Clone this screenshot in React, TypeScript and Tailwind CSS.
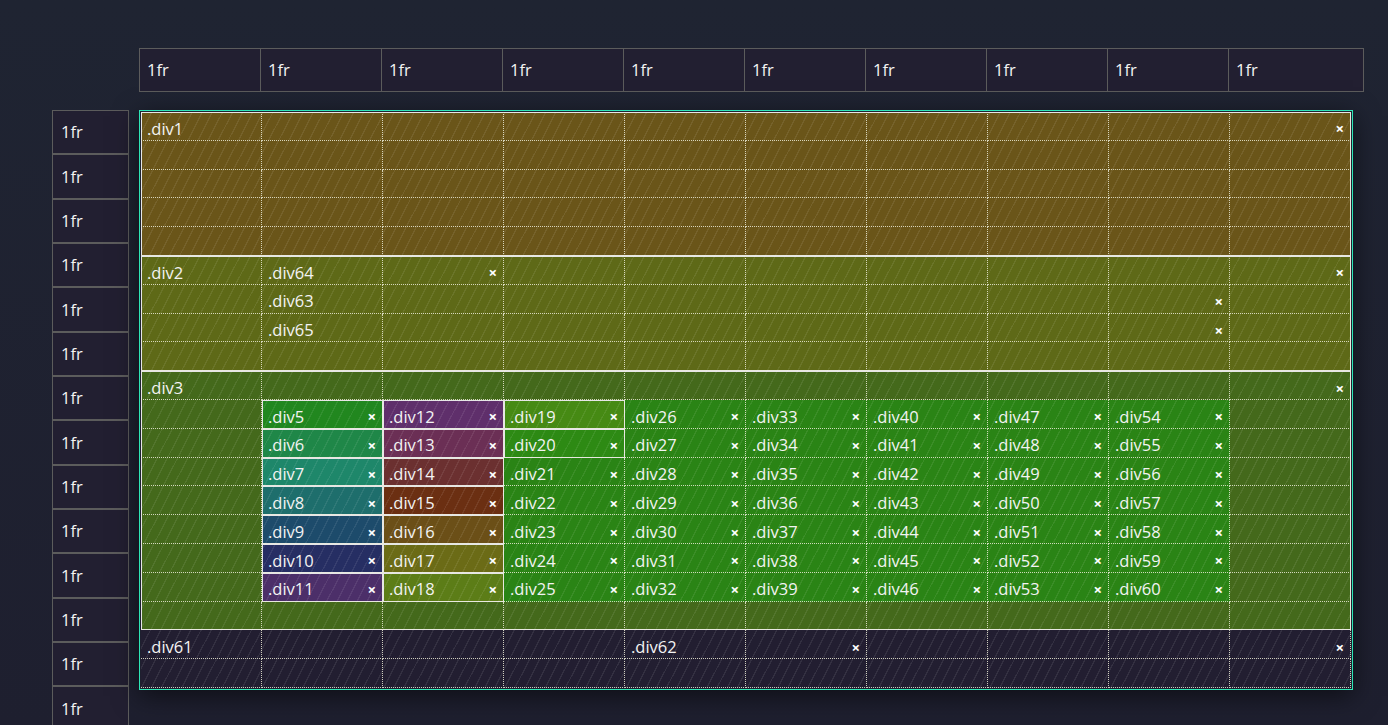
import React from "react";

const colStart: Record<number, string> = {
  2: "col-start-2",
  3: "col-start-3",
  4: "col-start-4",
  5: "col-start-5",
  6: "col-start-6",
  7: "col-start-7",
  8: "col-start-8",
  9: "col-start-9",
};
const rowStart: Record<number, string> = {
  11: "row-start-11",
  12: "row-start-12",
  13: "row-start-13",
  14: "row-start-14",
  15: "row-start-15",
  16: "row-start-16",
  17: "row-start-17",
};

const col2 = ["bg-[#21871f]", "bg-[#1f8748]", "bg-[#1e876a]", "bg-[#1e6e6c]", "bg-[#1d4b6b]", "bg-[#262e63]", "bg-[#4c2f69]"];
const col3 = ["bg-[#5f2f6b]", "bg-[#6b2f55]", "bg-[#6b3030]", "bg-[#6b2f12]", "bg-[#6b4f17]", "bg-[#6b6b16]", "bg-[#5c7d17]"];

type Item = { name: string; cls: string; x?: boolean; bordered?: boolean };

function buildNested(): Item[] {
  const out: Item[] = [];
  let n = 5;
  for (let c = 2; c <= 9; c++) {
    for (let r = 11; r <= 17; r++) {
      const i = r - 11;
      let bg = "bg-[#2a8415]";
      let bordered = false;
      if (c === 2) {
        bg = col2[i];
        bordered = true;
      } else if (c === 3) {
        bg = col3[i];
        bordered = true;
      } else if (c === 4 && i === 0) {
        bg = "bg-[#468a14]";
        bordered = true;
      } else if (c === 4 && i === 1) {
        bg = "bg-[#2d8a14]";
        bordered = true;
      }
      out.push({
        name: `.div${n}`,
        cls: `${colStart[c]} ${rowStart[r]} ${bg}`,
        x: true,
        bordered,
      });
      n++;
    }
  }
  return out;
}

function Cell({ item }: { item: Item }) {
  return (
    <div
      className={`${item.cls} relative min-w-0 ${item.bordered ? "border border-[#e6e6e6]" : ""}`}
    >
      <div
        className={`flex h-[28.8px] items-center justify-between pt-[5px] ${
          item.bordered ? "pl-[5px] pr-[6px] -mt-px" : "pl-[6px] pr-[7px]"
        }`}
      >
        <span className="text-[16.5px] leading-none text-[#f3f3f3]">{item.name}</span>
        {item.x ? <span className="text-[15px] font-bold leading-none text-white">×</span> : null}
      </div>
    </div>
  );
}

export default function App() {
  const main: Item[] = [
    { name: ".div1", cls: "col-start-1 col-end-11 row-start-1 row-end-6 bg-[#6a5519]", x: true, bordered: true },
    { name: ".div2", cls: "col-start-1 col-end-11 row-start-6 row-end-10 bg-[#5e6917]", x: true, bordered: true },
    { name: ".div3", cls: "col-start-1 col-end-11 row-start-10 row-end-19 bg-[#44691b]", x: true, bordered: true },
    { name: ".div61", cls: "col-start-1 col-end-11 row-start-19 row-end-21 bg-[#221e31]", x: true },
  ];
  const div2Children: Item[] = [
    { name: ".div64", cls: "col-start-2 col-end-4 row-start-6", x: true },
    { name: ".div63", cls: "col-start-2 col-end-10 row-start-7", x: true },
    { name: ".div65", cls: "col-start-2 col-end-10 row-start-8", x: true },
  ];
  const nested = buildNested();
  const div62: Item = { name: ".div62", cls: "col-start-5 col-end-7 row-start-19", x: true };

  const overlayCells = Array.from({ length: 200 });

  return (
    <div className="h-[725px] w-full overflow-hidden bg-gradient-to-b from-[#1f2432] to-[#1e1f2f] font-['Open_Sans',sans-serif] text-[#f3f3f3]">
      {/* column header */}
      <div className="pl-[139px] pt-[48px]">
        <div className="flex h-[44px] w-[1225px] border border-[#5c5c5c] bg-[#221f31]">
          {Array.from({ length: 9 }).map((_, i) => (
            <div key={i} className="flex w-[121px] items-center border-r border-[#5c5c5c] pl-[7px] pt-[1px] text-[16.5px]">
              1fr
            </div>
          ))}
          <div className="flex flex-1 items-center pl-[7px] pt-[1px] text-[16.5px]">1fr</div>
        </div>
      </div>

      <div className="mt-[18px] flex">
        {/* row header */}
        <div className="ml-[52px] flex w-[77px] flex-col">
          {Array.from({ length: 14 }).map((_, i) => (
            <div key={i} className="flex h-[44.33px] shrink-0 items-center border border-[#5c5c5c] bg-[#221f31] pl-[8px] pt-[1px] text-[16.5px]">
              1fr
            </div>
          ))}
        </div>

        {/* grid */}
        <div className="ml-[10px] self-start border border-[#2ee6b6] p-px shadow-[0_6px_24px_rgba(0,0,0,0.55)]">
          <div className="relative grid h-[576px] w-[1210px] grid-cols-10 grid-rows-20">
            {main.map((it) => (
              <Cell key={it.name} item={it} />
            ))}
            {div2Children.map((it) => (
              <Cell key={it.name} item={it} />
            ))}
            {nested.map((it) => (
              <Cell key={it.name} item={it} />
            ))}
            <Cell item={div62} />
            <div className="col-start-4 col-end-10 row-start-11 row-end-18 border border-[#e6e6e6] pointer-events-none" />

            {/* stripes + dotted grid lines overlay */}
            <div className="pointer-events-none absolute inset-0 grid grid-cols-10 grid-rows-20 bg-[image:repeating-linear-gradient(117deg,rgba(255,255,255,0.08)_0px,rgba(255,255,255,0.08)_1.3px,transparent_1.3px,transparent_9px)]">
              {overlayCells.map((_, i) => (
                <div key={i} className="border-b border-r border-dotted border-[rgba(235,235,215,0.85)]" />
              ))}
            </div>
          </div>
        </div>
      </div>
    </div>
  );
}
